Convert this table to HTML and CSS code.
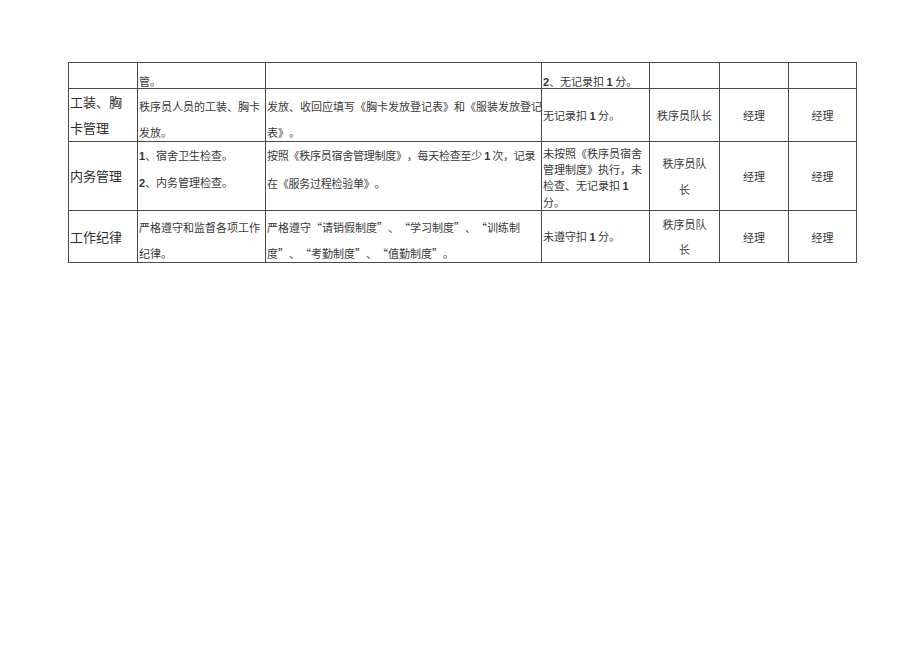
FILE: index.html
```html
<!DOCTYPE html>
<html lang="zh">
<head>
<meta charset="utf-8">
<link rel="stylesheet" href="styles.css">
</head>
<body>
<div class="sheet">
  <!-- row 1 -->
  <div class="c"></div>
  <div class="c txt bot">管。</div>
  <div class="c"></div>
  <div class="c txt bot"><span class="n">2</span>、无记录扣 <span class="n">1</span> 分。</div>
  <div class="c"></div>
  <div class="c"></div>
  <div class="c"></div>

  <!-- row 2 -->
  <div class="c big">工装、胸<br>卡管理</div>
  <div class="c txt l26 pt4">秩序员人员的工装、胸卡<br>发放。</div>
  <div class="c txt l26 pt4">发放、收回应填写《胸卡发放登记表》和《服装发放登记<br>表》。</div>
  <div class="c txt mid"><div>无记录扣 <span class="n">1</span> 分。</div></div>
  <div class="c txt mid ctr"><div>秩序员队长</div></div>
  <div class="c txt mid ctr"><div>经理</div></div>
  <div class="c txt mid ctr"><div>经理</div></div>

  <!-- row 3 -->
  <div class="c big mid"><div>内务管理</div></div>
  <div class="c txt l26"><span class="n">1</span>、宿舍卫生检查。<br><span class="n">2</span>、内务管理检查。</div>
  <div class="c txt l27 tight">按照《秩序员宿舍管理制度》，每天检查至少 <span class="n">1</span> 次，记录<br>在《服务过程检验单》。</div>
  <div class="c txt l16 pt3">未按照《秩序员宿舍<br>管理制度》执行，未<br>检查、无记录扣 <span class="n">1</span><br>分。</div>
  <div class="c txt mid ctr l26"><div>秩序员队<br>长</div></div>
  <div class="c txt mid ctr"><div>经理</div></div>
  <div class="c txt mid ctr"><div>经理</div></div>

  <!-- row 4 -->
  <div class="c big mid"><div>工作纪律</div></div>
  <div class="c txt l26 pt3">严格遵守和监督各项工作<br>纪律。</div>
  <div class="c txt l26 pt3">严格遵守“请销假制度”、“学习制度”、“训练制<br>度”、“考勤制度”、“值勤制度”。</div>
  <div class="c txt mid"><div>未遵守扣 <span class="n">1</span> 分。</div></div>
  <div class="c txt mid ctr l25"><div>秩序员队<br>长</div></div>
  <div class="c txt mid ctr"><div>经理</div></div>
  <div class="c txt mid ctr"><div>经理</div></div>
</div>
</body>
</html>
```

FILE: styles.css
```css
html, body {
  margin: 0;
  padding: 0;
  background: #ffffff;
}

body {
  padding: 62px 0 0 68px;
  font-family: "Noto Sans CJK SC", "Liberation Sans", sans-serif;
  color: #3a3a3a;
}

.sheet {
  display: grid;
  grid-template-columns: 69px 128px 276px 108px 70px 69px 68px;
  grid-template-rows: 26px 53px 69px 52px;
  width: 788px;
  border-left: 1px solid #4a4a4a;
  border-top: 1px solid #4a4a4a;
}

.c {
  box-sizing: border-box;
  border-right: 1px solid #4a4a4a;
  border-bottom: 1px solid #4a4a4a;
  padding-left: 1px;
  white-space: nowrap;
  overflow: visible;
  text-spacing-trim: space-all;
}

.txt {
  font-size: 11px;
  line-height: 14px;
}

.tight {
  letter-spacing: -0.25px;
}

.n {
  font-family: "Liberation Sans", sans-serif;
  font-weight: bold;
  color: #333333;
}

.big {
  font-size: 13px;
  line-height: 26px;
  color: #2e2e2e;
}

.bot {
  padding-top: 11px;
}

.mid {
  display: flex;
  flex-direction: column;
  justify-content: center;
}

.ctr {
  align-items: center;
  text-align: center;
  padding-left: 0;
}

.l16 { line-height: 16px; }
.l25 { line-height: 25px; }
.l26 { line-height: 26px; }
.l27 { line-height: 27px; }

.pt3 { padding-top: 3px; }
.pt4 { padding-top: 4px; }
```
